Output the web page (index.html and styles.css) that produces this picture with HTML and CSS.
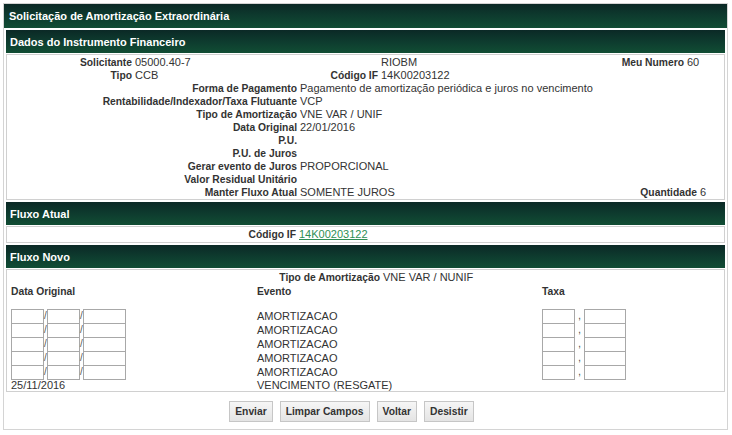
FILE: index.html
```html
<!DOCTYPE html>
<html lang="pt-BR">
<head>
<meta charset="utf-8">
<title>Solicitação de Amortização Extraordinária</title>
<link rel="stylesheet" href="styles.css">
</head>
<body>
<div class="page">
  <div class="title">Solicitação de Amortização Extraordinária</div>

  <div class="section">
    <div class="sec-head">Dados do Instrumento Financeiro</div>
    <div class="box box-dados">
      <div class="row row-a">
        <span class="lbl">Solicitante</span><span class="val">05000.40-7</span>
        <span class="lbl"></span><span class="val">RIOBM</span>
        <span class="lbl">Meu Numero</span><span class="val">60</span>
      </div>
      <div class="row row-a">
        <span class="lbl">Tipo</span><span class="val">CCB</span>
        <span class="lbl">Código IF</span><span class="val">14K00203122</span>
        <span class="lbl"></span><span class="val"></span>
      </div>
      <div class="row row-b"><span class="lbl">Forma de Pagamento</span><span class="val">Pagamento de amortização periódica e juros no vencimento</span></div>
      <div class="row row-b"><span class="lbl">Rentabilidade/Indexador/Taxa Flutuante</span><span class="val">VCP</span></div>
      <div class="row row-b"><span class="lbl">Tipo de Amortização</span><span class="val">VNE VAR / UNIF</span></div>
      <div class="row row-b"><span class="lbl">Data Original</span><span class="val">22/01/2016</span></div>
      <div class="row row-b"><span class="lbl">P.U.</span><span class="val"></span></div>
      <div class="row row-b"><span class="lbl">P.U. de Juros</span><span class="val"></span></div>
      <div class="row row-b"><span class="lbl">Gerar evento de Juros</span><span class="val">PROPORCIONAL</span></div>
      <div class="row row-b"><span class="lbl">Valor Residual Unitário</span><span class="val"></span></div>
      <div class="row row-b">
        <span class="lbl">Manter Fluxo Atual</span><span class="val">SOMENTE JUROS</span>
        <span class="lbl">Quantidade</span><span class="val">6</span>
      </div>
    </div>
  </div>

  <div class="section">
    <div class="sec-head">Fluxo Atual</div>
    <div class="box box-atual">
      <div class="row row-c"><span class="lbl">Código IF</span><span class="val"><a class="link" href="#">14K00203122</a></span></div>
    </div>
  </div>

  <div class="section">
    <div class="sec-head">Fluxo Novo</div>
    <div class="box box-novo">
      <div class="row row-d"><span class="lbl">Tipo de Amortização</span><span class="val">VNE VAR / NUNIF</span></div>
      <div class="grid-row col-heads">
        <span class="c1 lbl-l">Data Original</span><span class="c2 lbl-l">Evento</span><span class="c3 lbl-l">Taxa</span>
      </div>
      <div class="inputs">
        <div class="grid-row in-row">
          <span class="c1 date"><input class="d1"><span class="sl">/</span><input class="d2"><span class="sl">/</span><input class="d3"></span>
          <span class="c2">AMORTIZACAO</span>
          <span class="c3 taxa"><input class="t1"><span class="cm">,</span><input class="t2"></span>
        </div>
        <div class="grid-row in-row">
          <span class="c1 date"><input class="d1"><span class="sl">/</span><input class="d2"><span class="sl">/</span><input class="d3"></span>
          <span class="c2">AMORTIZACAO</span>
          <span class="c3 taxa"><input class="t1"><span class="cm">,</span><input class="t2"></span>
        </div>
        <div class="grid-row in-row">
          <span class="c1 date"><input class="d1"><span class="sl">/</span><input class="d2"><span class="sl">/</span><input class="d3"></span>
          <span class="c2">AMORTIZACAO</span>
          <span class="c3 taxa"><input class="t1"><span class="cm">,</span><input class="t2"></span>
        </div>
        <div class="grid-row in-row">
          <span class="c1 date"><input class="d1"><span class="sl">/</span><input class="d2"><span class="sl">/</span><input class="d3"></span>
          <span class="c2">AMORTIZACAO</span>
          <span class="c3 taxa"><input class="t1"><span class="cm">,</span><input class="t2"></span>
        </div>
        <div class="grid-row in-row">
          <span class="c1 date"><input class="d1"><span class="sl">/</span><input class="d2"><span class="sl">/</span><input class="d3"></span>
          <span class="c2">AMORTIZACAO</span>
          <span class="c3 taxa"><input class="t1"><span class="cm">,</span><input class="t2"></span>
        </div>
      </div>
      <div class="grid-row last-row">
        <span class="c1">25/11/2016</span><span class="c2">VENCIMENTO (RESGATE)</span><span class="c3"></span>
      </div>
    </div>
  </div>

  <div class="buttons">
    <button class="btn">Enviar</button>
    <button class="btn">Limpar Campos</button>
    <button class="btn">Voltar</button>
    <button class="btn">Desistir</button>
  </div>
</div>
</body>
</html>
```

FILE: styles.css
```css
* { box-sizing: border-box; }

html, body {
  margin: 0;
  padding: 0;
  background: #ffffff;
}

body {
  font-family: "Liberation Sans", Arial, sans-serif;
  font-size: 11px;
  color: #333333;
}

.page {
  margin: 3px 0 0 3px;
  width: 725px;
  border: 1px solid #d4d4d4;
  padding-bottom: 7px;
}

.title {
  height: 24px;
  line-height: 25px;
  padding-left: 5px;
  color: #ffffff;
  font-weight: bold;
  background: linear-gradient(to bottom, #0b2926 0%, #0e3d2f 55%, #114d34 100%);
}

.section {
  margin-top: 2px;
  padding: 0 2px 0 2px;
}

.sec-head {
  height: 23px;
  line-height: 24px;
  padding-left: 4px;
  color: #ffffff;
  font-weight: bold;
  background: linear-gradient(to bottom, #0b2926 0%, #0e3d2f 55%, #114d34 100%);
}

.box {
  margin-top: 1px;
  border: 1px solid #d0d0d0;
  background: #ffffff;
}

.box-dados {
  padding: 1px 0 0 0;
}

.row {
  display: grid;
  height: 13px;
  line-height: 13px;
  white-space: nowrap;
}

.lbl {
  text-align: right;
  font-weight: bold;
  font-size: 10.3px;
  color: #333333;
}

.val {
  padding-left: 3px;
  color: #333333;
}

.row-a {
  grid-template-columns: 125px 168px 78px 222px 84px 1fr;
}

.row-b {
  grid-template-columns: 290px 1fr auto 27px;
}

.box-atual .row {
  height: 15px;
  line-height: 15px;
}

.row-c {
  grid-template-columns: 289px 1fr;
}

.link {
  color: #2f8f55;
  text-decoration: underline;
}

.box-novo {
  padding-top: 1px;
}

.row-d {
  grid-template-columns: 373px 1fr;
}

.grid-row {
  display: grid;
  grid-template-columns: 250px 285px 1fr;
  white-space: nowrap;
}

.c1 {
  padding-left: 4px;
}

.lbl-l {
  font-weight: bold;
  font-size: 10.3px;
}

.col-heads {
  height: 14px;
  line-height: 15px;
}

.inputs {
  margin-top: 11px;
}

.in-row {
  height: 14px;
  line-height: 14px;
}

.date,
.taxa {
  display: flex;
  align-items: flex-start;
  height: 14px;
}

input {
  display: block;
  height: 15px;
  margin: 0;
  padding: 0;
  border: 1px solid #a8a8a8;
  background: #ffffff;
  font: inherit;
}

.d1 { width: 33px; }
.d2 { width: 33px; }
.d3 { width: 43px; }

.sl {
  width: 3px;
  line-height: 14px;
  font-size: 10px;
  color: #555555;
  text-align: center;
}

.t1 { width: 33px; }
.t2 { width: 42px; }

.cm {
  width: 9px;
  line-height: 13px;
  text-align: center;
  color: #555555;
}

.last-row {
  height: 12px;
  line-height: 12px;
}

.buttons {
  display: flex;
  justify-content: center;
  gap: 7px;
  margin-top: 9px;
  padding-right: 28px;
}

.btn {
  height: 21px;
  padding: 0 5px;
  margin: 0;
  font-family: "Liberation Sans", Arial, sans-serif;
  font-size: 10.3px;
  font-weight: bold;
  color: #333333;
  background: linear-gradient(to bottom, #f6f6f6, #e4e4e4);
  border: 1px solid #c6c6c6;
  border-radius: 0;
}
```
